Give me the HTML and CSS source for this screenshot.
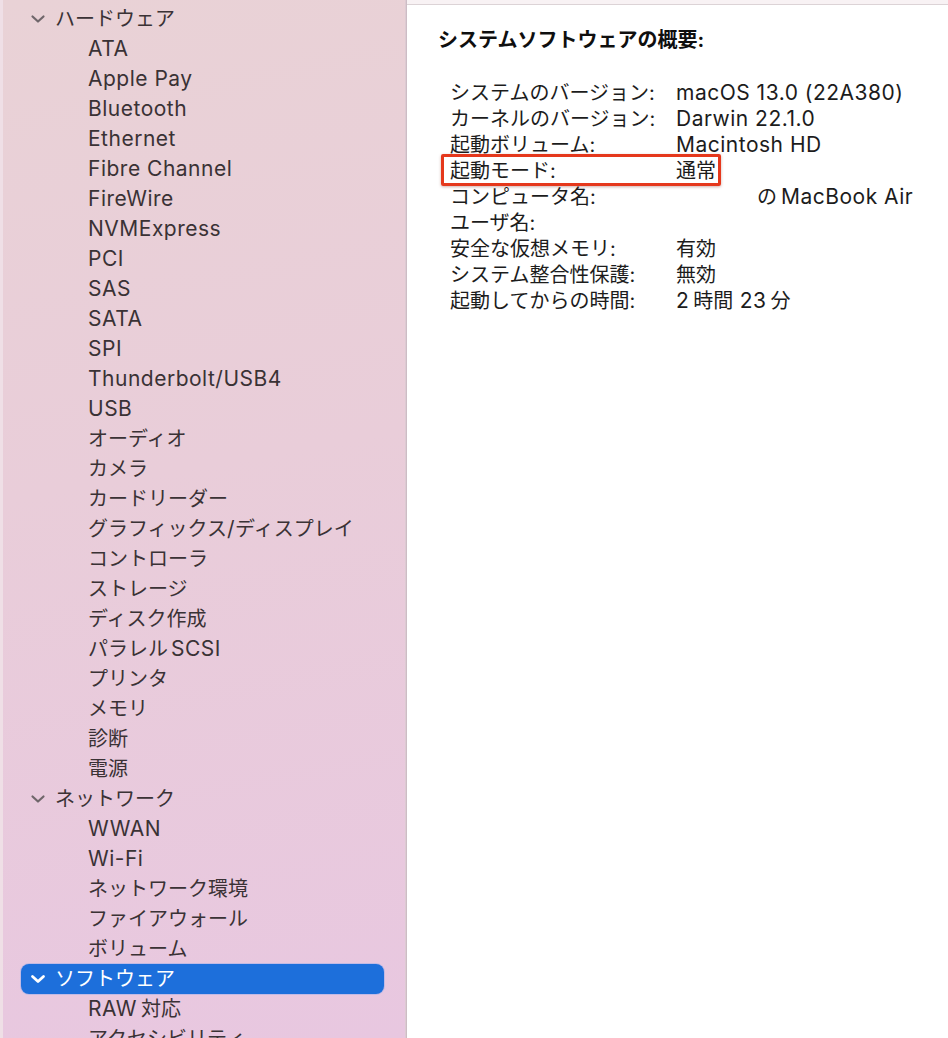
FILE: index.html
```html
<!DOCTYPE html>
<html lang="ja">
<head>
<meta charset="utf-8">
<link rel="stylesheet" href="styles.css">
</head>
<body>
<div class="window">
  <aside class="sidebar">
    <ul class="tree">
      <li class="cat"><svg class="chev" viewBox="0 0 16 10"><path d="M2.5 2.5 L8 7.5 L13.5 2.5"/></svg><span>ハードウェア</span></li>
      <li class="item"><span class="l">ATA</span></li>
      <li class="item"><span class="l">Apple Pay</span></li>
      <li class="item"><span class="l">Bluetooth</span></li>
      <li class="item"><span class="l">Ethernet</span></li>
      <li class="item"><span class="l">Fibre Channel</span></li>
      <li class="item"><span class="l">FireWire</span></li>
      <li class="item"><span class="l">NVMExpress</span></li>
      <li class="item"><span class="l">PCI</span></li>
      <li class="item"><span class="l">SAS</span></li>
      <li class="item"><span class="l">SATA</span></li>
      <li class="item"><span class="l">SPI</span></li>
      <li class="item"><span class="l">Thunderbolt/USB4</span></li>
      <li class="item"><span class="l">USB</span></li>
      <li class="item">オーディオ</li>
      <li class="item">カメラ</li>
      <li class="item">カードリーダー</li>
      <li class="item">グラフィックス<span class="l">/</span>ディスプレイ</li>
      <li class="item">コントローラ</li>
      <li class="item">ストレージ</li>
      <li class="item">ディスク作成</li>
      <li class="item">パラレル<span class="l sp">SCSI</span></li>
      <li class="item">プリンタ</li>
      <li class="item">メモリ</li>
      <li class="item">診断</li>
      <li class="item">電源</li>
      <li class="cat"><svg class="chev" viewBox="0 0 16 10"><path d="M2.5 2.5 L8 7.5 L13.5 2.5"/></svg><span>ネットワーク</span></li>
      <li class="item"><span class="l">WWAN</span></li>
      <li class="item"><span class="l">Wi-Fi</span></li>
      <li class="item">ネットワーク環境</li>
      <li class="item">ファイアウォール</li>
      <li class="item">ボリューム</li>
      <li class="cat selected"><svg class="chev" viewBox="0 0 16 10"><path d="M2.5 2.5 L8 7.5 L13.5 2.5"/></svg><span>ソフトウェア</span></li>
      <li class="item"><span class="l">RAW</span><span class="gap"></span>対応</li>
      <li class="item">アクセシビリティ</li>
    </ul>
  </aside>
  <main class="content">
    <div class="topbar"></div>
    <div class="body">
      <h1 class="title">システムソフトウェアの概要:</h1>
      <div class="info">
        <div class="row"><span class="label">システムのバージョン:</span><span class="value"><span class="l">macOS 13.0 (22A380)</span></span></div>
        <div class="row"><span class="label">カーネルのバージョン:</span><span class="value"><span class="l">Darwin 22.1.0</span></span></div>
        <div class="row"><span class="label">起動ボリューム:</span><span class="value"><span class="l">Macintosh HD</span></span></div>
        <div class="row highlight"><span class="label">起動モード:</span><span class="value">通常</span></div>
        <div class="row"><span class="label">コンピュータ名:</span><span class="value"><span class="redacted"></span>の<span class="gap"></span><span class="l">MacBook Air</span></span></div>
        <div class="row"><span class="label">ユーザ名:</span><span class="value"></span></div>
        <div class="row"><span class="label">安全な仮想メモリ:</span><span class="value">有効</span></div>
        <div class="row"><span class="label">システム整合性保護:</span><span class="value">無効</span></div>
        <div class="row"><span class="label">起動してからの時間:</span><span class="value"><span class="l">2</span><span class="gap"></span>時間<span class="l"> 23</span><span class="gap"></span>分</span></div>
      </div>
    </div>
  </main>
</div>
</body>
</html>
```

FILE: styles.css
```css
html, body {
  margin: 0;
  padding: 0;
  height: 100%;
  overflow: hidden;
}

body {
  font-family: Inter, "Noto Sans CJK JP", sans-serif;
  font-size: 20px;
  background: #ffffff;
}

.l {
  font-size: 21px;
  letter-spacing: 0.5px;
}

.gap {
  display: inline-block;
  width: 4px;
}

.sp {
  margin-left: 3px;
}

.window {
  display: flex;
  height: 1038px;
}

.sidebar {
  width: 403px;
  flex: none;
  border-left: 3px solid #efdfe6;
  border-right: 1px solid #cdbcc5;
  background: linear-gradient(170deg, #e9d2d6 0%, #e9cdd9 45%, #e8c7e0 100%);
  box-shadow: inset -1px 0 0 #dccbd2;
  overflow: hidden;
}

.tree {
  list-style: none;
  margin: 0;
  padding: 4px 0 0 0;
}

.tree li {
  height: 30px;
  line-height: 30px;
  margin: 0 22px 0 18px;
  color: #3a3235;
  white-space: nowrap;
}

.cat {
  display: flex;
  align-items: center;
  padding-left: 9px;
  gap: 9px;
  border-radius: 8px;
}

.chev {
  width: 16px;
  height: 10px;
  flex: none;
  fill: none;
  stroke: #6f666a;
  stroke-width: 2.2;
  stroke-linecap: round;
  stroke-linejoin: round;
}

.cat.selected {
  background: #1d6fdb;
  color: #ffffff;
  box-shadow: 0 0 0 1px rgba(120, 160, 240, 0.35);
}

.cat.selected .chev {
  stroke: #ffffff;
  stroke-width: 2.8;
}

.item {
  padding-left: 67px;
}

.content {
  flex: 1;
  display: flex;
  flex-direction: column;
  background: #ffffff;
}

.topbar {
  height: 4px;
  background: #f8f2f4;
  border-bottom: 1px solid #dcd3d6;
  flex: none;
}

.body {
  padding: 22px 0 0 31px;
  color: #1c1c1c;
}

.title {
  margin: 0;
  font-size: 20px;
  font-weight: 700;
  line-height: 26px;
  color: #0f0f0f;
}

.info {
  margin-top: 27px;
  padding-left: 12px;
}

.row {
  display: flex;
  height: 26px;
  line-height: 26px;
  white-space: nowrap;
}

.label {
  width: 226px;
  flex: none;
}

.highlight {
  position: relative;
}

.highlight::after {
  content: "";
  position: absolute;
  left: -9px;
  top: -4px;
  width: 274px;
  height: 26px;
  border: 3px solid #e5381c;
  border-radius: 2px;
  box-shadow: 0 1px 3px rgba(120, 30, 20, 0.35);
}

.redacted {
  display: inline-block;
  width: 81px;
}
```
